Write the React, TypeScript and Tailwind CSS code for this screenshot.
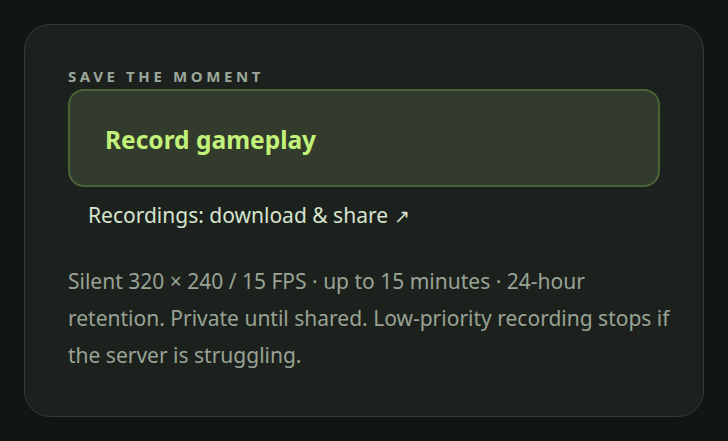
export default function App() {
  return (
    <div
      className="min-h-[441px] bg-[#111514] p-6 flex"
      style={{ fontFamily: '"Noto Sans", sans-serif' }}
    >
      <div className="w-[680px] rounded-[26px] border border-[#353b34] bg-[#1d211e] px-[43px] pt-[42px] pb-[38px]">
        {/* Label */}
        <div className="text-[15px] font-bold leading-[18px] tracking-[0.24em] text-[#9aa79b] uppercase">
          Save the moment
        </div>

        {/* Main action */}
        <button className="mt-[4px] w-full h-[98px] rounded-[16px] border-2 border-[#4b6338] bg-[#323b2c] pl-[35px] pt-[4px] text-left text-[24.5px] font-bold text-[#c2f27a]">
          Record gameplay
        </button>

        <a className="mt-[13px] ml-[20px] block text-[21px] leading-[30px] text-[#d6e4cd]">
          Recordings: download &amp; share <span className="text-[19px]">↗</span>
        </a>

        <p className="mt-[32px] mr-[-16px] text-[21px] leading-[37px] text-[#98a394]">
          Silent 320 × 240 / 15 FPS · up to 15 minutes · 24-hour retention. Private until shared.
          Low-priority recording stops if the server is struggling.
        </p>
      </div>
    </div>
  );
}
